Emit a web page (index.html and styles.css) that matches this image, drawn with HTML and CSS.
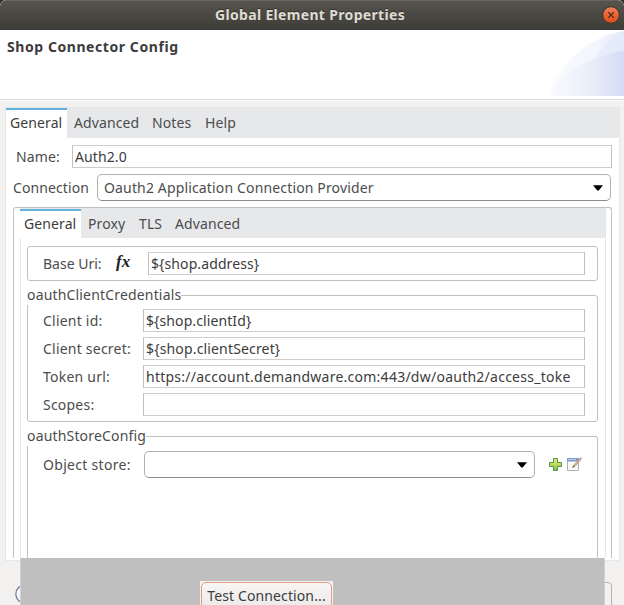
FILE: index.html
```html
<!DOCTYPE html>
<html lang="en">
<head>
<meta charset="utf-8">
<title>Global Element Properties</title>
<link rel="stylesheet" href="styles.css">
</head>
<body>
<div class="dialog">
  <header class="titlebar">
    <span class="title">Global Element Properties</span>
    <svg class="close" width="18" height="18" viewBox="0 0 18 18">
      <defs><linearGradient id="closeFill" x1="0" y1="0" x2="0" y2="1"><stop offset="0" stop-color="#f28560"/><stop offset=".5" stop-color="#ec6234"/><stop offset="1" stop-color="#df4b18"/></linearGradient></defs>
      <circle cx="9" cy="9" r="8.3" fill="url(#closeFill)" stroke="#36352f" stroke-width="1"/>
      <path d="M6.2 6.2l5.6 5.6M11.8 6.2l-5.6 5.6" stroke="#40291f" stroke-width="1.2"/>
    </svg>
  </header>
  <section class="banner">
    <h1>Shop Connector Config</h1>
    <svg class="swoosh" width="75" height="66" viewBox="0 0 75 66">
      <defs>
        <linearGradient id="sweepA"><stop offset="0" stop-color="#f9fbfe"/><stop offset=".6" stop-color="#f3f6fd"/><stop offset="1" stop-color="#e6ecf9"/></linearGradient>
        <linearGradient id="sweepB"><stop offset="0" stop-color="#f8fafe"/><stop offset=".5" stop-color="#ecf0fb"/><stop offset="1" stop-color="#d3dcf5"/></linearGradient>
      </defs>
      <path d="M1 66C3 39 43 4 75 1V66Z" fill="url(#sweepA)"/>
      <path d="M45 30C52 17 62 6 75 1V30Z" fill="#dfe7f8" opacity=".5"/>
      <path d="M1 66C7 45 43 24 75 21V66Z" fill="url(#sweepB)"/>
    </svg>
  </section>
  <main class="content">
    <div class="folder outer">
      <nav class="tabs">
        <span class="tab active">General</span><span class="tab">Advanced</span><span class="tab notes">Notes</span><span class="tab">Help</span>
      </nav>
      <div class="row name-row"><label class="name">Name:</label><div class="input">Auth2.0</div></div>
      <div class="row connection-row"><label class="connection">Connection</label>
        <div class="combo"><span class="provider">Oauth2 Application Connection Provider</span><svg class="arrow" width="10" height="6" viewBox="0 0 10 6"><path d="M0 .3H10L5.7 5.5H4.3Z"/></svg></div>
      </div>
      <div class="frame">
        <div class="folder inner">
          <nav class="tabs">
            <span class="tab active">General</span><span class="tab proxy">Proxy</span><span class="tab tls">TLS</span><span class="tab">Advanced</span>
          </nav>
          <div class="group base"><label>Base Uri:</label><span class="fx">fx</span><div class="input address">${shop.address}</div></div>
          <div class="group credentials">
            <div class="legend cred-legend">oauthClientCredentials</div>
            <div class="field"><label class="client-id">Client id:</label><div class="input client-value">${shop.clientId}</div></div>
            <div class="field"><label class="client-secret">Client secret:</label><div class="input secret-value">${shop.clientSecret}</div></div>
            <div class="field"><label class="token">Token url:</label><div class="input url-value">https://account.demandware.com:443/dw/oauth2/access_toke</div></div>
            <div class="field"><label class="scopes">Scopes:</label><div class="input"></div></div>
          </div>
          <div class="group store">
            <div class="legend store-legend">oauthStoreConfig</div>
            <div class="store-row"><label class="object">Object store:</label>
              <div class="combo"><svg class="arrow" width="10" height="6" viewBox="0 0 10 6"><path d="M0 .3H10L5.7 5.5H4.3Z"/></svg></div>
              <svg class="add" width="14" height="14" viewBox="0 0 14 14">
                <defs><linearGradient id="plusFill" x1="0" y1="0" x2="0" y2="1"><stop offset="0" stop-color="#e4e96a"/><stop offset=".5" stop-color="#c2dc54"/><stop offset="1" stop-color="#7db944"/></linearGradient></defs>
                <path d="M4.5 .5H8.5V4.5H12.5V8.5H8.5V12.5H4.5V8.5H.5V4.5H4.5Z" fill="url(#plusFill)" stroke="#4d9455"/>
              </svg>
              <svg class="edit" width="16" height="15" viewBox="0 0 16 15">
                <path d="M.5 1.5H11.5V13.5H.5Z" fill="#f8f8f8" stroke="#b1b1b1"/>
                <path d="M0 1H12V4.5H0Z" fill="#7d98cf"/><path d="M1 2.5H9" stroke="#b9d0f1"/>
                <path d="M5.5 10.5L7 7.8 13.8 .6 14.8 1.6 8.3 9.2Z" fill="#d4b28d" stroke="#a68b72" stroke-width=".6"/><path d="M5.3 10.7L6.5 8.6 7.4 9.6Z" fill="#444"/>
              </svg>
            </div>
          </div>
        </div>
      </div>
    </div>
  </main>
  <svg class="help" width="20" height="20" viewBox="0 0 20 20"><circle cx="10" cy="10" r="9.2" fill="#f6f7f9" stroke="#6c7a99" stroke-width="1.2"/><path d="M5 6Q7 4 9 4" fill="none" stroke="#b9c6dc" stroke-width="2"/></svg>
  <div class="finish"></div>
  <div class="overlay"><div class="test-area"><button class="test">Test Connection...</button></div></div>
</div>
</body>
</html>
```
FILE: styles.css
```css
* { box-sizing: border-box; }
body { margin: 0; background: #2f2e2a; color: #4c4c4c; font: 14px/20px "Noto Sans", "Open Sans", sans-serif; }
.dialog { position: relative; width: 624px; height: 605px; overflow: hidden; background: #f2f1f0; white-space: nowrap; border-radius: 6px 6px 0 0; }
.titlebar { display: flex; align-items: center; height: 30px; padding: 0 4px 0 215px; background: linear-gradient(#56544d, #3d3c37); border-top: 1px solid #65635b; border-radius: 6px 6px 0 0; }
.title { margin-top: -2px; color: #dfdbd2; font-weight: bold; letter-spacing: .33px; text-shadow: 0 -1px #33322e; }
.close { margin: -1px 0 0 auto; }
.banner { display: flex; justify-content: space-between; height: 70px; background: #fff; border-bottom: 1px solid #d8dadb; }
h1 { margin: 7px 0 0 7px; font-size: 14px; line-height: 20px; letter-spacing: .57px; color: #3c3c3c; }
.content { padding: 6px 4px 0 5px; border-top: 1px solid #fafafa; }
.folder { background: #fff; }
.outer { height: 454px; border: solid #e6e7e9; border-width: 0 1px 1px; }
.tabs { display: flex; height: 30px; background: #e7e8ea; }
.outer > .tabs { height: 31px; }
.tab { flex: none; width: 78px; padding: 6px 0 0 7px; line-height: 20px; letter-spacing: .1px; }
.tab.active { width: 61px; margin-top: 1px; padding: 3px 0 0 4px; background: #fff; border-top: 2px solid #62b3dc; color: #3c3c3c; }
.notes { width: 53px; }
.inner .proxy { width: 51px; }
.inner .tls { width: 36px; }
.input { flex: 1; height: 23px; padding: 1px 2px; border: 1px solid #c4c1bd; border-top-color: #cfccc9; border-bottom-color: #cfccc9; background: #fff; color: #3c3c3c; overflow: hidden; line-height: 20px; letter-spacing: .1px; }
.row { display: flex; }
.name-row { margin: 7px 7px 0 10px; }
.name { width: 56px; line-height: 24px; letter-spacing: .1px; }
.connection-row { margin: 5px 8px 0 7px; }
.connection { width: 84px; line-height: 27px; letter-spacing: .1px; }
.combo { display: flex; flex: 1; align-items: center; height: 27px; padding: 0 7px 0 6px; border: 1px solid #b3b1ae; border-bottom-color: #8d8b89; border-radius: 5px; background: #fff; }
.provider { letter-spacing: .15px; }
.arrow { margin-left: auto; fill: #000; }
.frame { height: 351px; margin: 6px 7px 0; padding: 0 5px 0 6px; border: 1px solid #c3c1be; border-bottom: 0; border-radius: 3px 3px 0 0; }
.inner { height: 350px; border: solid #e6e7e9; border-width: 0 1px; }
.inner > .tabs { margin-left: -1px; }
.inner .tab { padding-left: 6px; }
.inner .proxy { padding-left: 7px; }
.inner .tab.active { width: 61px; padding-left: 4px; }
.inner .proxy { width: 52px; }
.group { margin: 0 7px 0 6px; border: 1px solid #c3c1be; border-radius: 3px; }
.base { display: flex; height: 35px; margin-top: 8px; padding: 5px 12px 0 15px; }
.base label { width: 73px; line-height: 24px; }
.fx { width: 32px; font: italic bold 17px/20px "Liberation Serif", serif; color: #222; }
.credentials { height: 127px; margin-top: 14px; padding-right: 12px; }
.legend { width: max-content; height: 20px; margin: -11px 0 0 -1px; background: #fff; letter-spacing: .17px; }
.field { display: flex; height: 28px; padding-left: 15px; }
.credentials .legend { margin-bottom: 4px; }
.field label { width: 100px; line-height: 23px; letter-spacing: .22px; }
.secret-value { letter-spacing: .16px; }
.url-value { letter-spacing: .25px; }
.store { height: 122px; margin-top: 14px; border-bottom: 0; border-radius: 3px 3px 0 0; }
.store-row { display: flex; margin-top: 5px; padding: 0 15px; align-items: center; }
.store-row label { flex: none; width: 101px; letter-spacing: .3px; }
.store-row .combo { flex: none; width: 391px; }
.add { flex: none; margin-left: 14px; }
.edit { flex: none; margin-left: 4px; }
.help { position: absolute; left: 15px; top: 584px; }
.finish { position: absolute; left: 540px; top: 582px; width: 72px; height: 30px; border: 1px solid #b3b1ae; border-radius: 4px; }
.overlay { position: absolute; left: 20px; top: 558px; width: 585px; height: 47px; padding: 23px 0 0 179px; background: #bfbfbf; border-left: 1px solid #d4d3d2; border-right: 1px solid #d0cfce; overflow: hidden; }
.test-area { width: 133px; padding: 1px; background: #f2f1f0; }
.test { display: block; width: 131px; height: 28px; padding: 0; border: 1px solid #e79b80; border-radius: 5px; background: linear-gradient(#f7f6f5, #ebe9e8); color: #3c3c3c; font: inherit; letter-spacing: .12px; }
```
